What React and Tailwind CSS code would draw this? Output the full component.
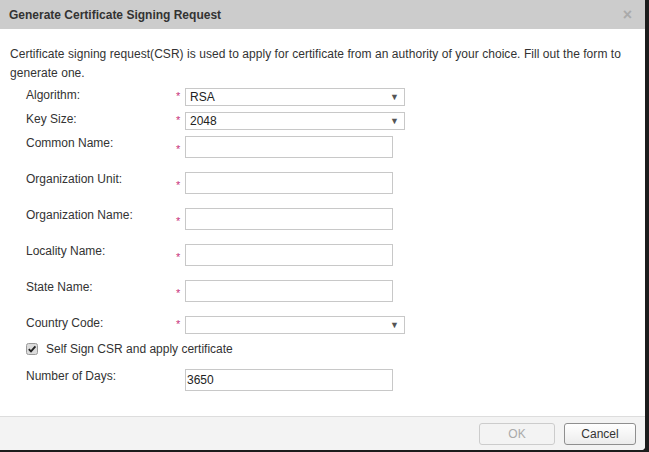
import React from 'react'

const font = { fontFamily: '"Liberation Sans", Arial, sans-serif' }

const Star = ({ className = '' }) => (
  <span className={`w-[9px] text-[11px] leading-[14px] text-[#c8327a] ${className}`}>*</span>
)

const SelectRow = ({ label, value }) => (
  <div className="flex h-[18px] items-start">
    <div className="w-[150px] text-[12px] leading-[14px]">{label}</div>
    <Star className="mt-[1px]" />
    <div className="flex h-[18px] w-[220px] items-center justify-between border border-[#c8c8c8] bg-white pl-[4px] pr-[5px]">
      <span className="text-[12px] leading-[14px] text-[#222]">{value}</span>
      <span className="text-[9px] leading-none text-[#555]">▼</span>
    </div>
  </div>
)

const InputRow = ({ label, value = '', required = true }) => (
  <div className="flex h-[22px] items-start">
    <div className="w-[150px] text-[12px] leading-[14px]">{label}</div>
    {required ? <Star className="mt-[6px]" /> : <span className="w-[9px]" />}
    <div className="flex h-[22px] w-[208px] items-center border border-[#c8c8c8] bg-white pl-[1px]">
      <span className="text-[12px] leading-[14px] text-[#222]">{value}</span>
    </div>
  </div>
)

export default function App() {
  return (
    <div className="h-[452px] w-[649px] bg-[#1c1c1c] text-[#333]" style={font}>
      <div className="flex h-[450px] w-[645px] flex-col overflow-hidden rounded-br-[4px] bg-white">
        <div className="flex h-[29px] shrink-0 items-center justify-between bg-[#cccccc] pl-[9px] pr-[13px]">
          <span className="text-[12px] font-bold text-[#333]">Generate Certificate Signing Request</span>
          <span className="text-[16px] font-bold leading-none text-[#aaaaaa]">×</span>
        </div>
        <div className="flex flex-1 flex-col px-[10px] pt-[16px]">
          <p className="text-[12px] leading-[19px] tracking-[0.05px]">
            Certificate signing request(CSR) is used to apply for certificate from an authority of your choice. Fill out the form to generate one.
          </p>
          <div className="ml-[16px] mt-[5px] flex flex-col">
            <SelectRow label="Algorithm:" value="RSA" />
            <div className="h-[6px]" />
            <SelectRow label="Key Size:" value="2048" />
            <div className="h-[6px]" />
            <div className="flex flex-col gap-[14px]">
              <InputRow label="Common Name:" />
              <InputRow label="Organization Unit:" />
              <InputRow label="Organization Name:" />
              <InputRow label="Locality Name:" />
              <InputRow label="State Name:" />
              <SelectRow label="Country Code:" value="" />
            </div>
            <div className="mt-[8px] flex h-[14px] items-center">
              <svg width="12" height="12" viewBox="0 0 12 12" className="shrink-0">
                <rect x="0.5" y="0.5" width="11" height="11" rx="2" fill="#dcdcdc" stroke="#9a9a9a" />
                <path d="M2.8 6.2 L5 8.4 L9.4 3.4" fill="none" stroke="#222" strokeWidth="1.8" />
              </svg>
              <span className="ml-[8px] text-[12px] leading-[14px]">Self Sign CSR and apply certificate</span>
            </div>
            <div className="mt-[13px]">
              <InputRow label="Number of Days:" value="3650" required={false} />
            </div>
          </div>
        </div>
        <div className="flex h-[34px] shrink-0 items-center justify-end gap-[9px] border-t border-[#dddddd] bg-[#f3f3f3] pr-[9px]">
          <button className="h-[22px] w-[76px] rounded-[3px] border border-[#cccccc] bg-[#f3f3f3] text-[12px] text-[#aaaaaa]">
            OK
          </button>
          <button className="h-[22px] w-[72px] rounded-[3px] border border-[#8f8f8f] bg-gradient-to-b from-white to-[#ececec] text-[12px] text-[#333]">
            Cancel
          </button>
        </div>
      </div>
    </div>
  )
}
